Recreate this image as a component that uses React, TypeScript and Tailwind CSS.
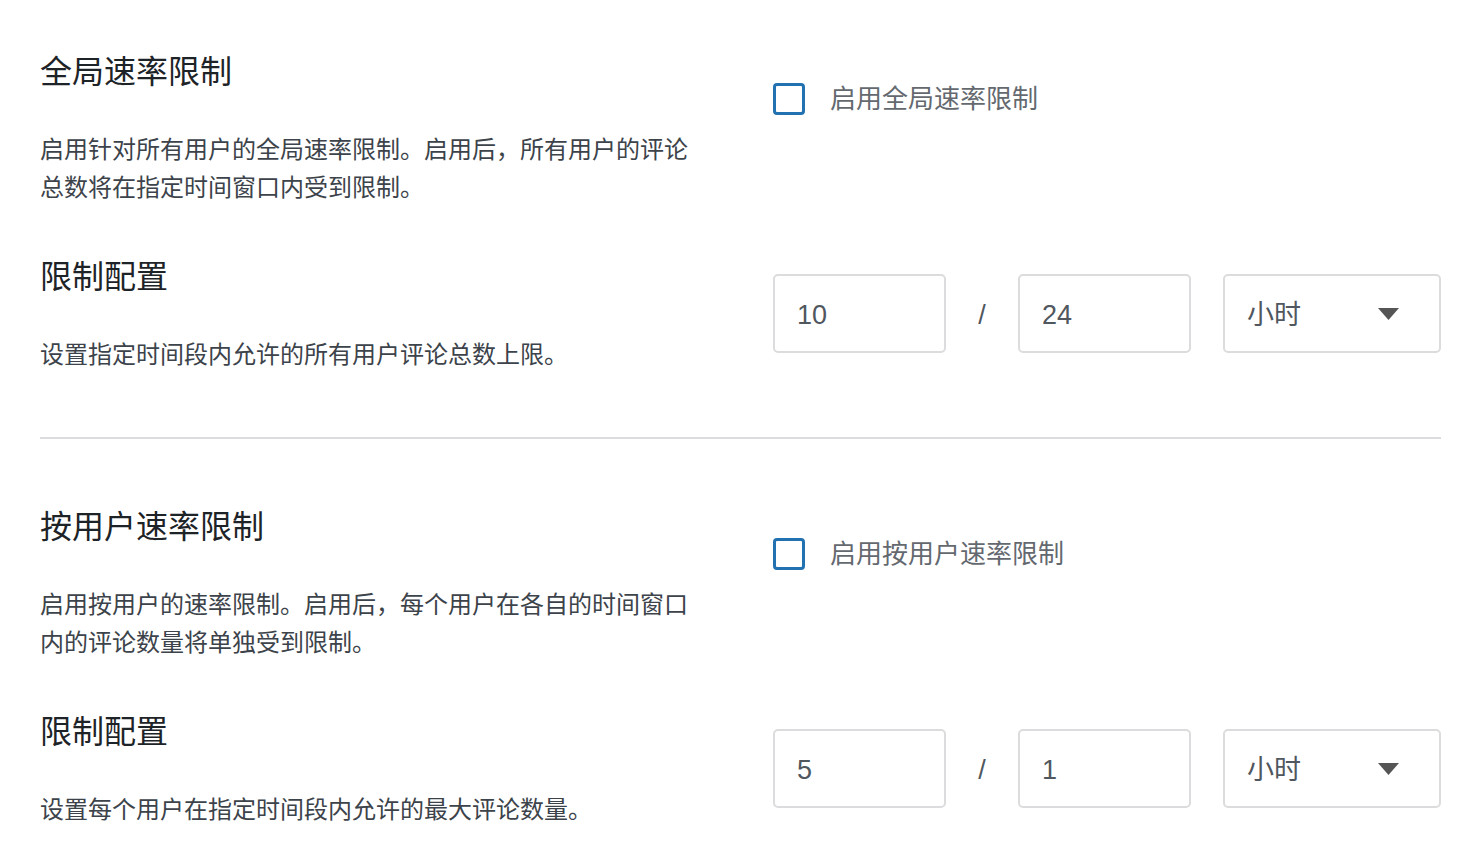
import React from 'react';

const font = { fontFamily: '"Liberation Sans", "Noto Sans CJK SC", sans-serif' };

interface SectionProps {
  title: string;
  description: string;
  checkboxLabel: string;
  configDescription: string;
  count: string;
  period: string;
  unit: string;
}

function Section({ title, description, checkboxLabel, configDescription, count, period, unit }: SectionProps) {
  return (
    <div className="flex flex-col">
      {/* 启用开关 */}
      <div className="flex">
        <div className="w-[733px] shrink-0">
          <h2 className="text-[32px] leading-[44px] text-[#1d2327] font-normal">{title}</h2>
          <p className="mt-[37px] w-[660px] text-[24px] leading-[38px] text-[#3c434a]">{description}</p>
        </div>
        <label className="flex items-center gap-[25px] pt-[33px] h-fit">
          <span className="w-[32px] h-[32px] border-[3px] border-[#2271b1] rounded-[4px] bg-white" />
          <span className="text-[26px] leading-[32px] text-[#646970]">{checkboxLabel}</span>
        </label>
      </div>

      {/* 限制配置 */}
      <div className="flex mt-[48px]">
        <div className="w-[733px] shrink-0">
          <h3 className="text-[32px] leading-[44px] text-[#1d2327] font-normal">限制配置</h3>
          <p className="mt-[37px] text-[24px] leading-[38px] text-[#3c434a]">{configDescription}</p>
        </div>
        <div className="flex items-center pt-[19px] h-fit">
          <div className="w-[173px] h-[79px] border-2 border-[#dcdcde] rounded-[5px] flex items-center px-[22px] pt-[4px] text-[27px] text-[#50575e]">
            {count}
          </div>
          <span className="w-[72px] text-center pt-[4px] text-[27px] text-[#50575e]">/</span>
          <div className="w-[173px] h-[79px] border-2 border-[#dcdcde] rounded-[5px] flex items-center px-[22px] pt-[4px] text-[27px] text-[#50575e]">
            {period}
          </div>
          <div className="ml-[32px] w-[218px] h-[79px] border-2 border-[#dcdcde] rounded-[5px] flex items-center justify-between pl-[22px] pr-[40px] text-[27px] text-[#50575e]">
            <span className="pt-[4px]">{unit}</span>
            <svg width="21" height="12" viewBox="0 0 21 12">
              <path d="M0 0 H21 L10.5 12 Z" fill="#555" />
            </svg>
          </div>
        </div>
      </div>
    </div>
  );
}

export default function App() {
  return (
    <div className="min-h-[868px] bg-white px-[40px] pt-[50px]" style={font}>
      <Section
        title="全局速率限制"
        description="启用针对所有用户的全局速率限制。启用后，所有用户的评论总数将在指定时间窗口内受到限制。"
        checkboxLabel="启用全局速率限制"
        configDescription="设置指定时间段内允许的所有用户评论总数上限。"
        count="10"
        period="24"
        unit="小时"
      />
      <div className="mt-[63px] mb-[66px] w-[1401px] h-[2px] bg-[#dcdcde]" />
      <Section
        title="按用户速率限制"
        description="启用按用户的速率限制。启用后，每个用户在各自的时间窗口内的评论数量将单独受到限制。"
        checkboxLabel="启用按用户速率限制"
        configDescription="设置每个用户在指定时间段内允许的最大评论数量。"
        count="5"
        period="1"
        unit="小时"
      />
    </div>
  );
}
